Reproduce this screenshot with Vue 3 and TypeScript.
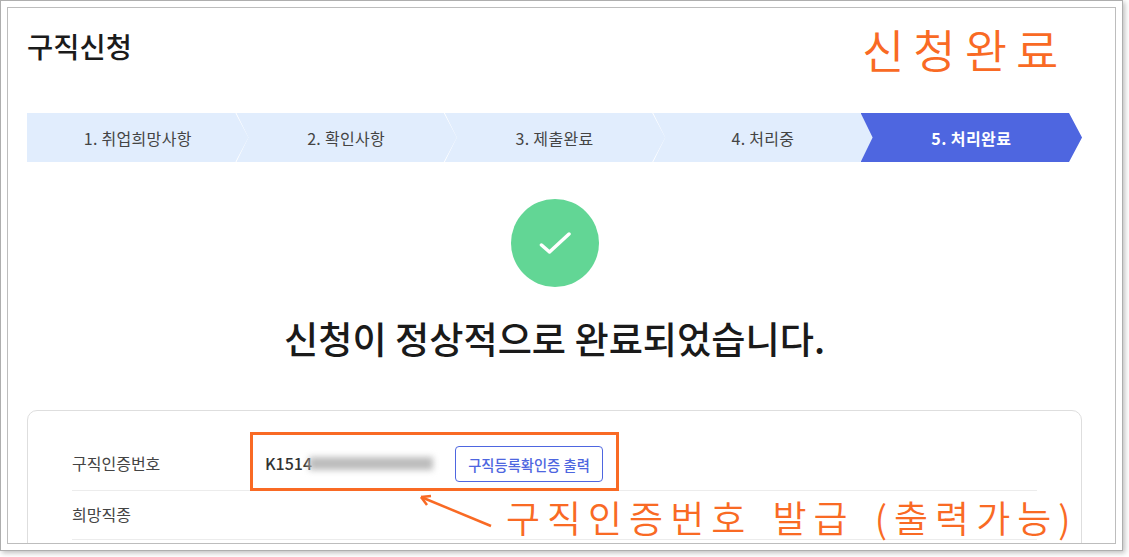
<template>
  <div class="shot">
    <div class="frame">
      <main class="page">
        <h1 class="title">구직신청</h1>
        <ol class="steps">
          <li v-for="(s, i) in steps" :key="s" class="step" :class="{ first: i === 0, current: i === steps.length - 1 }">
            {{ i + 1 }}. {{ s }}
          </li>
        </ol>
        <div class="done-icon">
          <svg viewBox="0 0 32 32" width="32" height="32" fill="none" stroke="#fff" stroke-width="3.5" stroke-linecap="round" stroke-linejoin="round">
            <path d="M2.5 18 L10.5 25 L30 7" />
          </svg>
        </div>
        <h2 class="done-text">신청이 정상적으로 완료되었습니다.</h2>
        <section class="card">
          <div class="row first-row">
            <span class="label">구직인증번호</span>
            <span class="number">K1514<i class="blur"></i></span>
            <button class="print">구직등록확인증 출력</button>
          </div>
          <div class="row second-row">
            <span class="label">희망직종</span>
          </div>
        </section>
      </main>
      <span class="note note-top">신청완료</span>
      <div class="mark"></div>
      <svg class="arrow" width="90" height="50" viewBox="0 0 90 50" fill="none" stroke="#f96a24" stroke-width="2.5">
        <path d="M82 39 L12 10" />
        <path d="M12 10 L22 9 M12 10 L18 18" />
      </svg>
      <span class="note note-bottom">구직인증번호 발급 (출력가능)</span>
    </div>
  </div>
</template>

<script setup lang="ts">
const steps: string[] = ['취업희망사항', '확인사항', '제출완료', '처리중', '처리완료']
</script>

<style>
html,
body {
  margin: 0;
  background: #fff;
  overflow: hidden;
}
</style>

<style scoped>
.shot {
  width: 1129px;
  height: 557px;
  overflow: hidden;
  font-family: "Noto Sans CJK KR", "Roboto", sans-serif;
}

.frame {
  position: relative;
  box-sizing: border-box;
  width: 1123px;
  height: 551px;
  padding: 6px;
  background: #fff;
  border: 1px solid #aeaeae;
  box-shadow: 2px 2px 5px rgba(0, 0, 0, 0.25);
}

.page {
  box-sizing: border-box;
  height: 100%;
  padding: 0 33px 0 19px;
  border: 1px solid #bdbdbd;
  overflow: hidden;
}

.title {
  margin: 0;
  padding-top: 19px;
  height: 85px;
  box-sizing: border-box;
  font-size: 28.5px;
  line-height: 38px;
  font-weight: 500;
  color: #1b1b1b;
}

.steps {
  display: flex;
  margin: 20px 0 0;
  padding: 0;
  list-style: none;
}

.step {
  flex: 1;
  height: 49px;
  margin-left: -13px;
  display: flex;
  align-items: center;
  justify-content: center;
  font-size: 16px;
  letter-spacing: 0.3px;
  color: #444;
  background: #e1edfd;
  clip-path: polygon(1px 0, calc(100% - 13px) 0, 100% 50%, calc(100% - 13px) 100%, 1px 100%, 13px 50%);
}

.step.first {
  margin-left: 0;
  clip-path: polygon(0 0, calc(100% - 13px) 0, 100% 50%, calc(100% - 13px) 100%, 0 100%);
}

.step.current {
  background: #4e66e0;
  color: #fff;
  font-weight: 700;
  letter-spacing: 0.4px;
  clip-path: polygon(0 0, calc(100% - 13px) 0, 100% 50%, calc(100% - 13px) 100%, 0 100%, 12px 50%);
}

.done-icon {
  width: 88px;
  height: 88px;
  margin: 37px auto 0;
  border-radius: 50%;
  background: #62d695;
  display: flex;
  align-items: center;
  justify-content: center;
}

.done-text {
  margin: 26px 0 0;
  text-align: center;
  font-size: 37.2px;
  line-height: 50px;
  font-weight: 500;
  color: #1a1a1a;
}

.card {
  margin-top: 47px;
  padding: 25px 44px 0;
  height: 200px;
  box-sizing: border-box;
  border: 1px solid #dedede;
  border-radius: 10px;
}

.row {
  display: flex;
  align-items: center;
  box-sizing: border-box;
  height: 50px;
  border-bottom: 1px solid #ececec;
  font-size: 16px;
  color: #444;
}

.first-row {
  height: 55px;
}

.second-row {
  height: 49px;
  padding-bottom: 2px;
}

.label {
  width: 193px;
}

.number {
  display: flex;
  align-items: center;
  font-size: 16px;
  font-weight: 500;
  color: #333;
  width: 190px;
}

.blur {
  width: 124px;
  height: 13px;
  margin-left: -3px;
  background: #bcbcbc;
  filter: blur(3px);
}

.print {
  height: 36px;
  width: 148px;
  margin-top: 2px;
  padding: 0;
  border: 1px solid #4e66e0;
  border-radius: 4px;
  background: #fff;
  color: #4e66e0;
  font-family: inherit;
  font-size: 14.3px;
  font-weight: 500;
}

.note {
  position: absolute;
  color: #f96a24;
  font-weight: 350;
  white-space: nowrap;
}

.note-top {
  left: 861px;
  top: 15px;
  font-size: 46px;
  line-height: 64px;
  letter-spacing: 9px;
}

.note-bottom {
  left: 505px;
  top: 490px;
  font-size: 37px;
  line-height: 52px;
  letter-spacing: 7px;
  word-spacing: 5px;
}

.mark {
  position: absolute;
  left: 249px;
  top: 431px;
  width: 363px;
  height: 53px;
  border: 3px solid #f96a24;
}

.arrow {
  position: absolute;
  left: 408px;
  top: 486px;
}
</style>
